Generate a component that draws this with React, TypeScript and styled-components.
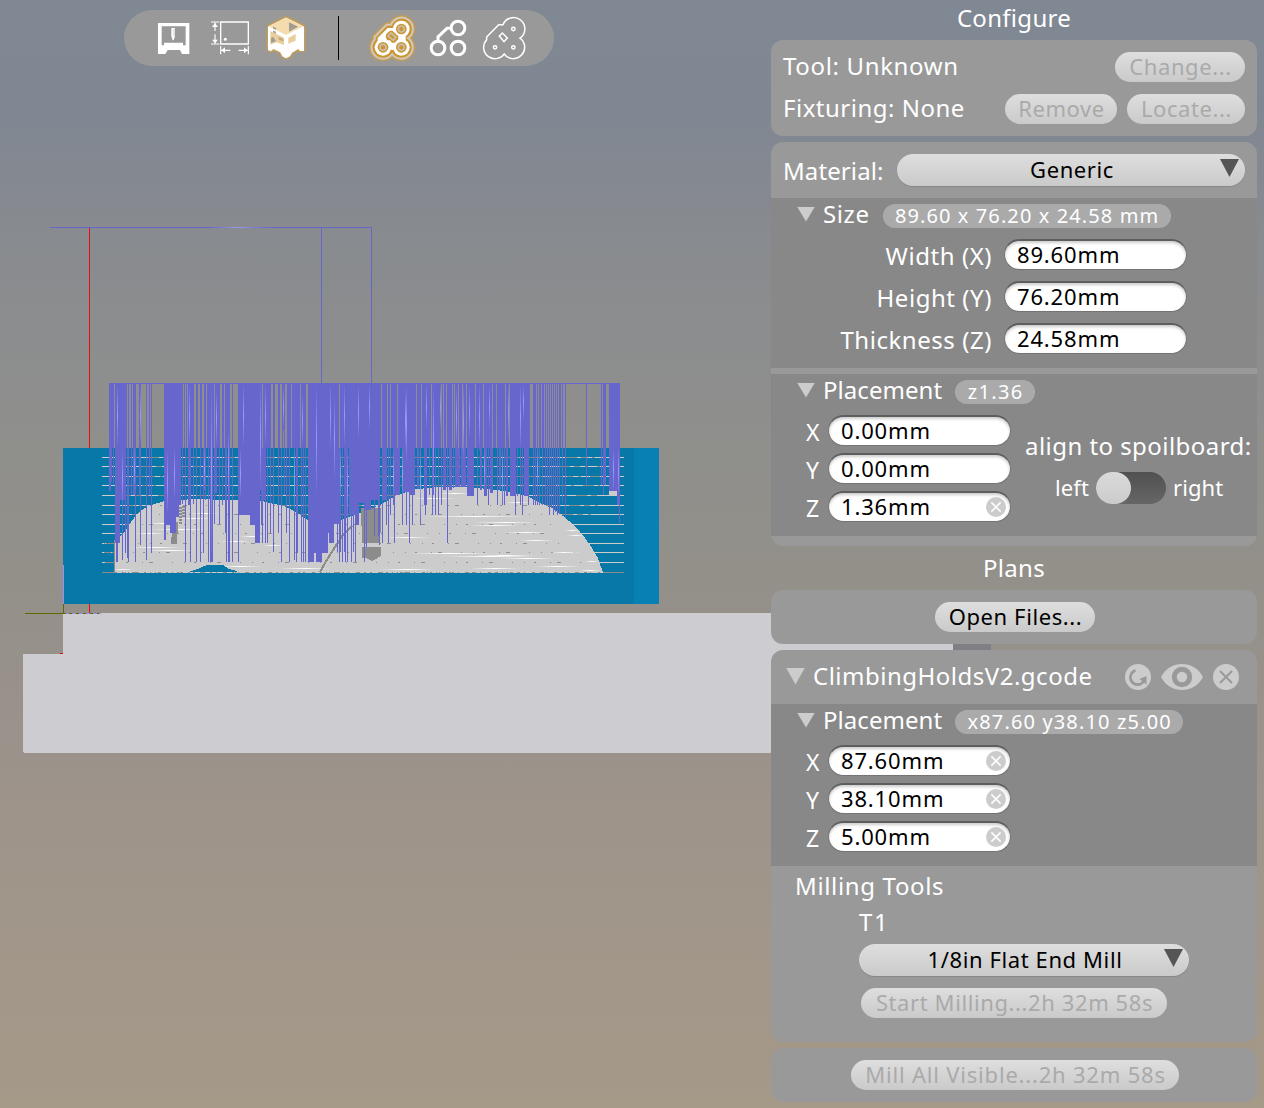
import React from "react";
import styled, { createGlobalStyle } from "styled-components";

const Global = createGlobalStyle`
  * { box-sizing: border-box; }
  html, body { margin: 0; padding: 0; overflow: hidden; }
  body, button, input { font-family: "Noto Sans", "Open Sans", sans-serif; }
`;

const Screen = styled.main`
  position: relative;
  display: flex;
  justify-content: space-between;
  width: 1264px;
  height: 1108px;
  overflow: hidden;
  color: #fff;
  background: linear-gradient(#7f8893 0, #808792 110px, #888b8f 240px, #8d8e8e 370px, #929089 560px, #99918b 700px, #9f958a 860px, #a59988 1108px);
`;

const SceneLayer = styled.svg`
  position: absolute;
  inset: 0;
`;

const Toolbar = styled.nav`
  position: relative;
  display: flex;
  align-items: center;
  width: 430px;
  height: 56px;
  margin: 10px 0 0 124px;
  padding-left: 29px;
  border-radius: 28px;
  background: #999;
`;

const ToolGroup = styled.div`
  display: flex;
  gap: 14px;
`;

const Divider = styled.div`
  width: 1px;
  height: 44px;
  margin: 0 32px 0 31px;
  background: #000;
`;

const ToolIcon = styled.svg<{ $active?: boolean }>`
  display: block;
  width: 42px;
  height: 42px;
  overflow: visible;
  filter: ${(p) => (p.$active ? "drop-shadow(0 0 1px #dda032) drop-shadow(0 0 1px #dda032)" : "none")};
`;

const Sidebar = styled.aside`
  position: relative;
  display: flex;
  flex-direction: column;
  width: 486px;
  margin-right: 7px;
`;

const Title = styled.h2<{ $height: number }>`
  height: ${(p) => p.$height}px;
  margin: 0;
  font-size: 24px;
  font-weight: 400;
  letter-spacing: 0.3px;
  line-height: 35px;
  text-align: center;
`;

const Card = styled.section<{ $height: number; $gap?: number }>`
  flex: none;
  height: ${(p) => p.$height}px;
  margin-bottom: ${(p) => p.$gap ?? 6}px;
  border-radius: 12px;
  background: #999;
  overflow: hidden;
`;

const Row = styled.div<{ $pad?: string; $gap?: number; $justify?: string }>`
  display: flex;
  align-items: center;
  justify-content: ${(p) => p.$justify ?? "flex-start"};
  gap: ${(p) => p.$gap ?? 0}px;
  padding: ${(p) => p.$pad ?? "12px 12px 0"};
`;

const Label = styled.span<{ $size?: number; $spacing?: number; $grow?: boolean; $drop?: number }>`
  flex: ${(p) => (p.$grow ? "1" : "none")};
  padding-top: ${(p) => p.$drop ?? 0}px;
  padding-bottom: ${(p) => 2 - (p.$drop ?? 0)}px;
  font-size: ${(p) => p.$size ?? 24}px;
  letter-spacing: ${(p) => p.$spacing ?? 0.5}px;
  line-height: 28px;
  white-space: nowrap;
`;

const FieldLabel = styled.span<{ $wide: boolean }>`
  flex: none;
  width: ${(p) => (p.$wide ? 220 : 22)}px;
  padding: 2px ${(p) => (p.$wide ? 12 : 0)}px 0 0;
  font-size: ${(p) => (p.$wide ? 24 : 23)}px;
  letter-spacing: 0.55px;
  line-height: 28px;
  text-align: ${(p) => (p.$wide ? "right" : "left")};
  white-space: nowrap;
`;

const Pill = styled.button<{ $width: number; $spacing?: number }>`
  flex: none;
  width: ${(p) => p.$width}px;
  height: 30px;
  padding: 0 0 2px 1px;
  border: 0;
  border-radius: 15px;
  background: linear-gradient(#dedede, #cacaca);
  color: #000;
  font-size: 22px;
  letter-spacing: ${(p) => p.$spacing ?? 0.6}px;
  line-height: 28px;
  white-space: nowrap;
  &:disabled { color: #aaa; }
`;

const SelectBox = styled.button<{ $width: number }>`
  display: flex;
  align-items: center;
  flex: none;
  width: ${(p) => p.$width}px;
  height: 32px;
  padding: 0 6px 0 27px;
  border: 0;
  border-radius: 16px;
  background: linear-gradient(#dedede, #cacaca);
  box-shadow: 0 1px 1px #888;
  color: #000;
  font-size: 22px;
  letter-spacing: 0.6px;
`;

const SelectValue = styled.span`
  flex: 1;
  padding-bottom: 2px;
  line-height: 30px;
  text-align: center;
`;

const Caret = styled.span<{ $w: number; $h: number; $dark?: boolean }>`
  flex: none;
  width: ${(p) => p.$w}px;
  height: ${(p) => p.$h}px;
  margin-bottom: ${(p) => (p.$dark ? 4 : 2)}px;
  background: ${(p) => (p.$dark ? "#555" : "#ccc")};
  clip-path: polygon(0 0, 100% 0, 50% 100%);
`;

const Inset = styled.div<{ $height: number; $gap?: number }>`
  height: ${(p) => p.$height}px;
  margin-bottom: ${(p) => p.$gap ?? 0}px;
  background: #888;
`;

const InsetHeader = styled.div`
  display: flex;
  align-items: center;
  height: 36px;
  padding: 0 0 2px 26px;
  gap: 8px;
`;

const Badge = styled.span<{ $width: number; $spacing: number }>`
  width: ${(p) => p.$width}px;
  height: 24px;
  margin: 2px 0 0 5px;
  padding-left: 1px;
  border-radius: 12px;
  background: #aaa;
  font-size: 20px;
  letter-spacing: ${(p) => p.$spacing}px;
  line-height: 24px;
  text-align: center;
  white-space: nowrap;
`;

const Fields = styled.div<{ $gap: number; $pad: string }>`
  display: flex;
  flex-direction: column;
  gap: ${(p) => p.$gap}px;
  padding: ${(p) => p.$pad};
`;

const FieldRow = styled.label`
  display: flex;
  align-items: center;
  height: 30px;
`;

const InputShell = styled.span`
  display: flex;
  align-items: center;
  width: 183px;
  height: 31px;
  margin-bottom: 2px;
  padding: 0 4px 0 12px;
  border: 1px solid #747474;
  border-top: 2px solid #5e5e5e;
  border-radius: 16px;
  background: #fff;
  box-shadow: inset 0 2px 3px #ccc;
`;

const ValueInput = styled.input`
  flex: 1;
  min-width: 0;
  height: 28px;
  padding: 0 0 2px;
  border: 0;
  outline: 0;
  background: transparent;
  color: #000;
  font-size: 22px;
  letter-spacing: 0.85px;
`;

const PlacementBody = styled.div`
  display: flex;
`;

const AlignBlock = styled.div`
  display: flex;
  flex-direction: column;
  gap: 10px;
  padding: 22px 0 0 14px;
`;

const ToggleRow = styled.div`
  display: flex;
  align-items: center;
  gap: 7px;
  padding-left: 30px;
`;

const Track = styled.span`
  width: 70px;
  height: 32px;
  border-radius: 16px;
  background: linear-gradient(#505050, #666);
`;

const Knob = styled.span`
  display: block;
  width: 35px;
  height: 32px;
  border-radius: 16px;
  background: linear-gradient(#dadada, #cbcbcb);
`;

const IconSvg = styled.svg`
  flex: none;
  display: block;
`;

const FileHeading = styled.div`
  display: flex;
  flex: 1;
  align-items: center;
  gap: 8px;
`;

const ToolStack = styled.div`
  display: flex;
  flex-direction: column;
  padding-left: 88px;
`;

const StartRow = styled.div`
  padding: 12px 0 0 2px;
`;

/* ---------- toolpath scene ---------- */

// Rapid moves above the stock: [left, right]
const upper = [
  [109, 114], [115, 127], [128, 129], [131, 132], [133, 136], [139, 141], [146, 147], [149, 150], [151, 152],
  [164, 183], [184, 185], [186, 187], [188, 194], [196, 198], [200, 202], [204, 206], [207, 214], [215, 220],
  [222, 224], [225, 230], [232, 233], [238, 262], [263, 271], [273, 275], [278, 280], [282, 283], [284, 285],
  [287, 291], [292, 300], [301, 306], [308, 339], [340, 381], [382, 387], [388, 390], [391, 397], [398, 416],
  [417, 421], [422, 431], [432, 441], [442, 443], [444, 446], [447, 452], [453, 454], [455, 458], [459, 462],
  [463, 466], [467, 475], [476, 479], [480, 483], [484, 492], [493, 496], [497, 505], [506, 509], [510, 520],
  [521, 530], [533, 536], [537, 538], [539, 541], [542, 544], [545, 546], [547, 548], [549, 550], [551, 552],
  [553, 554], [555, 556], [557, 558], [559, 561], [562, 563], [565, 566], [586, 587], [601, 602], [603, 606],
  [609, 620],
];

// Plunges into the stock: [left, right, bottom]
const lower = [
  [109, 111, 491], [111, 112, 482], [113, 114, 484], [115, 120, 543], [116, 118, 562], [119, 125, 500], [122, 123, 560],
  [125, 126, 553], [127, 128, 558], [128, 129, 562], [131, 132, 495], [133, 136, 495], [135, 136, 562], [139, 141, 495],
  [140, 141, 545], [146, 147, 560], [151, 152, 553], [149, 150, 495], [164, 166, 540], [166, 170, 525], [170, 176, 533],
  [176, 179, 517], [179, 181, 505], [182, 183, 504], [185, 186, 562], [188, 190, 505], [190, 191, 562], [193, 194, 504],
  [196, 197, 562], [200, 201, 562], [203, 204, 553], [205, 206, 500], [208, 209, 562], [210, 213, 562], [214, 215, 524],
  [215, 217, 493], [219, 220, 524], [222, 223, 505], [225, 226, 533], [226, 227, 562], [228, 230, 562], [232, 233, 562],
  [238, 239, 562], [239, 250, 515], [250, 255, 525], [255, 260, 543], [261, 262, 525], [262, 263, 543], [265, 266, 543],
  [267, 268, 543], [263, 265, 500], [270, 271, 533], [273, 274, 552], [278, 279, 533], [281, 282, 562], [284, 285, 495],
  [286, 287, 533], [289, 290, 562], [294, 295, 560], [296, 297, 562], [297, 298, 553], [301, 302, 562], [303, 304, 562],
  [305, 306, 562], [308, 314, 562], [314, 316, 553], [316, 322, 562], [321, 328, 553], [327, 329, 533], [329, 334, 543],
  [335, 336, 524], [337, 338, 552], [339, 340, 562], [342, 343, 562], [345, 346, 562], [347, 348, 552], [334, 339, 524],
  [340, 341, 552], [344, 345, 552], [345, 347, 516], [347, 348, 562], [349, 356, 515], [351, 352, 562],
  [353, 354, 552], [355, 356, 562], [356, 359, 525], [359, 365, 503], [364, 365, 562], [366, 367, 547], [365, 371, 510],
  [371, 380, 500], [374, 375, 536], [378, 379, 536], [379, 380, 545], [382, 383, 543], [383, 387, 500], [386, 387, 525],
  [388, 389, 543], [390, 391, 515], [393, 394, 505], [394, 395, 543], [395, 400, 495], [402, 403, 525], [403, 409, 492],
  [406, 407, 525], [409, 410, 543], [410, 415, 495], [412, 413, 525], [417, 419, 489], [420, 421, 525], [424, 427, 505],
  [425, 426, 515], [429, 430, 495], [432, 433, 515], [435, 436, 515], [438, 439, 515], [441, 442, 505], [443, 446, 490],
  [447, 448, 543], [449, 452, 490], [453, 454, 488], [455, 460, 487], [461, 466, 487], [467, 474, 496], [477, 478, 505],
  [480, 482, 490], [484, 487, 496], [488, 489, 505], [490, 493, 493], [497, 498, 505], [499, 501, 489], [502, 503, 505],
  [504, 505, 505], [506, 508, 496], [510, 516, 496], [515, 516, 515], [517, 518, 496], [520, 521, 505], [522, 523, 515],
  [524, 529, 496], [528, 529, 505], [533, 534, 505], [535, 536, 505], [537, 538, 505], [539, 540, 505], [542, 543, 505],
  [545, 546, 505], [547, 548, 505], [549, 550, 515], [551, 552, 508], [553, 554, 515], [555, 556, 512], [557, 558, 515],
  [559, 560, 514], [562, 563, 503], [565, 566, 517], [586, 587, 485], [601, 602, 485], [603, 604, 495], [604, 606, 485],
  [609, 617, 491], [617, 620, 505], [619, 620, 523],
];

// Highlighted moves: [x, top, bottom]
const bright = [
  [117, 384, 447], [122, 450, 505], [140, 384, 447], [134, 448, 490], [167, 450, 515], [174, 448, 500], [189, 384, 447],
  [204, 448, 490], [211, 384, 560], [216, 390, 447], [228, 430, 500], [243, 384, 447], [240, 448, 500], [260, 384, 490],
  [265, 384, 447], [283, 384, 430], [294, 448, 510], [302, 395, 447], [316, 384, 495], [330, 384, 450], [334, 395, 480],
  [340, 450, 500], [344, 384, 447], [347, 450, 520], [358, 384, 440], [369, 384, 430], [393, 450, 500], [402, 448, 500],
  [405, 390, 450], [406, 384, 465], [420, 448, 525], [426, 384, 430], [433, 384, 495], [440, 384, 430], [456, 384, 450],
  [463, 384, 460], [469, 384, 440], [479, 384, 450], [484, 448, 490], [489, 384, 430], [502, 448, 505], [508, 384, 440],
  [520, 384, 450], [523, 384, 420], [537, 448, 490], [613, 448, 491], [618, 448, 496],
];

const passes = [457, 466, 476, 485, 495, 505, 514, 524, 533, 543, 552, 562, 572];

// Short glints on the machined surface: [x, y, length]
const glints = [
  [146, 523, 40], [135, 533, 30], [178, 518, 35], [130, 547, 52], [146, 550, 50], [217, 566, 45], [113, 569, 20],
  [220, 541, 30], [240, 536, 25], [262, 545, 22], [280, 568, 50], [150, 529, 60], [190, 513, 30], [425, 516, 100],
  [475, 522, 60], [385, 537, 45], [470, 525, 50], [505, 532, 42], [520, 540, 32], [410, 553, 80], [445, 556, 90],
  [475, 555, 60], [500, 558, 55], [380, 569, 55], [470, 568, 50], [535, 566, 45], [565, 530, 15], [568, 535, 16],
  [580, 570, 20], [412, 498, 45], [440, 493, 30], [505, 502, 25], [550, 552, 30], [585, 561, 14],
];

const barPath = (bars: number[][], top: number, fixed?: number) =>
  bars.map((b) => `M${b[0]} ${top}H${b[1]}V${fixed ?? b[2]}H${b[0]}Z`).join("");

const Scene = () => (
  <SceneLayer width="1264" height="1108" viewBox="0 0 1264 1108" shapeRendering="crispEdges">
    <defs>
      <linearGradient id="beam">
        <stop offset=".5" stopColor="#6666cc" />
        <stop offset=".58" stopColor="#9999ee" />
        <stop offset=".68" stopColor="#6666cc" />
      </linearGradient>
      <linearGradient id="glint">
        <stop offset="0" stopColor="#fff" stopOpacity="0" />
        <stop offset=".5" stopColor="#fff" />
        <stop offset="1" stopColor="#fff" stopOpacity="0" />
      </linearGradient>
      <linearGradient id="lit" x2="0" y2="1">
        <stop offset="0" stopColor="#6666cc" />
        <stop offset=".5" stopColor="#9999ff" />
        <stop offset="1" stopColor="#6666cc" />
      </linearGradient>
    </defs>
    <path d="M63 613H953V752H23V654H63Z" fill="#cdccd1" />
    <path d="M24 752H953V753H24Z" fill="#cdccd1" />
    <path d="M953 640H991V654H953Z" fill="#807f85" />
    <path d="M89 228h1v385h-1z" fill="#e80c0c" />
    <path d="M60 653h3v1h-3z" fill="#e80c0c" />
    <path d="M50 227h322v1H50z" fill="url(#beam)" />
    <path d="M321 228h1v155h-1zM371 228h1v155h-1z" fill="#6666cc" />
    <path d="M63 448H634V604H63Z" fill="#0878a8" />
    <path d="M634 448H659V604H634Z" fill="#0880b3" />
    <path d="M63 565h1v39h-1z" fill="#9090ff" />
    <path d="M63 604h1v9h-1zM25 613h41v1H25z" fill="#666600" />
    <path d="M66 613.5h35" stroke="#9090f0" />
    <path d="M69 613.5h30" stroke="#666600" strokeDasharray="3 4" />
    {passes.map((y, i) => (
      <g key={y}>
        <path d={`M102 ${y}.5H624`} stroke={i === 12 ? "#8c8c8c" : "#ccc"} />
        <path d={`M${i > 8 ? 104 : 125} ${y}.5H${i > 6 ? 400 : 600}`} stroke="#8c8c8c" strokeDasharray={i > 8 ? "12 1" : "6 5 3 9 11 4"} strokeDashoffset={i * 7} />
      </g>
    ))}
    <path
      d="M114 572V543L120 537L126 530L131 522L137 514L142 510L148 506L158 503L164 501L185 500L188 499L237 500L262 501L274 504L284 506L296 512L306 519L313 526L330 526L345 518L360 513L380 505L397 495L417 489L440 487L460 487L490 489L510 492L527 496L540 503L552 508L563 516L575 526L585 538L592 548L598 558L601 567L603 572V573H114Z"
      fill="#ccc"
    />
    {passes.slice(5).map((y, i) => (
      <path key={y} d={`M${150 - i * 4} ${y}.5H${540 + i * 7}`} stroke="#909090" strokeDasharray="1 9 2 14 1 6 4 19 1 11" strokeDashoffset={i * 13} />
    ))}
    <path d="M114 572.5H600" stroke="#909090" strokeDasharray="3 5 2 4 1 7" />
    {glints.map(([x, y, w]) => (
      <path key={`${x}-${y}`} d={`M${x} ${y}h${w}v1h${-w}z`} fill="url(#glint)" />
    ))}
    <path d="M188 572L200 568L207 565H223L229 569L237 571V572Z" fill="#0878a8" />
    <path d="M320 572L325 563L333 550L343 535L352 526" fill="none" stroke="#8c8c8c" strokeWidth="2" />
    <path d="M114 572V540" stroke="#8c8c8c" />
    <path d="M361 508H381V532L379 535V543H362ZM362 547H381V556L376 559L372 561L366 558H362ZM172 533H177V544H171V541ZM174 522H178V533H174Z" fill="#8c8c8c" />
    <path d="M180 507v18M183 506v12" stroke="#8c8c8c" strokeDasharray="2 1" strokeWidth="3" />
    <path d="M609 491h8v4h-8z" fill="#ccc" />
    <path d="M109 383H620V384H109Z" fill="#6666cc" />
    <path d={barPath(upper, 384, 448)} fill="#6666cc" />
    <path d={barPath(lower, 448)} fill="#6666cc" />
    {bright.map(([x, top, bottom]) => (
      <rect key={`${x}-${top}`} x={x} y={top} width="1" height={bottom - top} fill="url(#lit)" />
    ))}
  </SceneLayer>
);

/* ---------- toolbar icons ---------- */

const MachineFront = () => (
  <ToolIcon viewBox="99 51 126 126">
    <path fillRule="evenodd" fill="#fff" d="M114 69H208V162H186L180 150H143L136 162H114ZM125 79V136H132V128H189V136H197V79Z" />
    <path d="M154 84H165V108L161 121H158L154 108Z" fill="#fff" />
    <path d="M162 87V108" stroke="#aaa" strokeWidth="2" />
  </ToolIcon>
);

const Dimensions = () => (
  <ToolIcon viewBox="267 51 126 126" fill="none" stroke="#fff" strokeWidth="4">
    <path d="M302 66H385V132H302Z" />
    <path d="M273 66H298M273 132H298M285 68V93M285 103V130M302 138V163M385 138V163M304 151H331M356 151H383" strokeWidth="3.4" />
    <path d="M276 81L285 69L294 81ZM276 119L285 130L294 119ZM315 142L304 151L315 160ZM372 142L383 151L372 160Z" fill="#fff" stroke="none" />
    <circle cx="316" cy="118" r="4.5" fill="#fff" stroke="none" />
  </ToolIcon>
);

const MachineCube = () => (
  <ToolIcon $active viewBox="435 51 126 126">
    <path d="M498 54L552 81V153H540L535 147L516 158L510 169L498 175L487 169L481 157L460 147L453 154L444 150V81Z" fill="#fff" />
    <path d="M498 54L550 80L498 106L446 80Z" fill="#f4dcae" />
    <path d="M451 93L492 113V135L470 127L451 134Z" fill="#e9cf9f" />
    <path d="M459 80L468 84V101L459 97Z" fill="#a39c90" />
    <path d="M453 114L459 110L468 123L453 129Z" fill="#a39c90" />
    <path d="M476 110L490 117V124L476 119Z" fill="#c3aa7d" />
    <path d="M507 67L534 80L507 95Z" fill="#a39c90" />
    <path d="M505 113L527 102V122L520 125L505 131Z" fill="#e9cf9f" />
    <path d="M498 54L552 81M498 54L444 81" fill="none" stroke="#f9e6c3" strokeWidth="3" />
    <path d="M446 82L498 108L550 82" fill="none" stroke="#fff" strokeWidth="5" />
  </ToolIcon>
);

const OUTLINE =
  "M1100 119V111L1136 74H1149A34 34 0 1 1 1200 114.5A34 34 0 1 1 1152.5 162A34 34 0 1 1 1100 119Z";

const PathsActive = () => (
  <ToolIcon $active viewBox="753 51 126 126" fill="none">
    <path d={OUTLINE} transform="translate(-336 0)" fill="#cb9534" stroke="#d0c8bb" strokeWidth="6" />
    <g fill="#fff">
      <circle cx="844" cy="87" r="25" />
      <circle cx="789" cy="142" r="25" />
      <circle cx="844" cy="142" r="25" />
      <path d="M773 126V114L803 84H820L857 105V125L844 142L817 150L789 142Z" />
    </g>
    <g fill="#cb9534">
      <circle cx="844" cy="87" r="16" />
      <circle cx="789" cy="142" r="16" />
      <circle cx="844" cy="142" r="16" />
      <path d="M797 110L799 102L810 92H817L835 109V117L824 128H816L810 121H802Z" />
    </g>
    <g stroke="#cbbfa9" strokeWidth="5">
      <circle cx="844" cy="87" r="9" />
      <circle cx="789" cy="142" r="9" />
      <circle cx="844" cy="142" r="9" />
      <path d="M804 108L813 99L828 112L820 121Z" />
    </g>
  </ToolIcon>
);

const PathsCut = () => (
  <ToolIcon viewBox="921 51 126 126" fill="none" stroke="#fff" strokeWidth="9">
    <circle cx="1014" cy="84" r="20.5" />
    <circle cx="954" cy="144" r="20.5" />
    <circle cx="1014" cy="144" r="20.5" />
    <path d="M954 124V111L981 85H994" />
  </ToolIcon>
);

const PathsOutline = () => (
  <ToolIcon viewBox="1089 51 126 126" fill="none" stroke="#fff" strokeWidth="4.5">
    <path d={OUTLINE} />
    <circle cx="1180" cy="87" r="5" />
    <circle cx="1125" cy="142" r="5" />
    <circle cx="1180" cy="142" r="5" />
    <path d="M1138 108L1147 99L1162 114L1152 125Z" />
  </ToolIcon>
);

/* ---------- sidebar pieces ---------- */

const CloseIcon = ({ size, ground }: { size: number; ground: string }) => (
  <IconSvg width={size} height={size} viewBox="0 0 26 26">
    <circle cx="13" cy="13" r="13" fill="#ccc" />
    <path d="M7 7L19 19M19 7L7 19" stroke={ground} strokeWidth="2" />
  </IconSvg>
);

const ReloadIcon = () => (
  <IconSvg width="26" height="26" viewBox="0 0 26 26">
    <circle cx="13" cy="13" r="13" fill="#ccc" />
    <path d="M10.5 6.5A7.2 7.2 0 1 0 18.5 17.5" fill="none" stroke="#999" strokeWidth="2.6" />
    <path d="M14.5 15L21.5 12V20.5Z" fill="#999" />
  </IconSvg>
);

const EyeIcon = () => (
  <IconSvg width="42" height="26" viewBox="0 0 42 26">
    <path d="M0 13C9-4.3 33-4.3 42 13C33 30.3 9 30.3 0 13Z" fill="#ccc" />
    <circle cx="21" cy="13" r="7.7" fill="none" stroke="#999" strokeWidth="5" />
  </IconSvg>
);

const Field = ({ label, value, wide = false, clearable }: { label: string; value: string; wide?: boolean; clearable?: boolean }) => (
  <FieldRow>
    <FieldLabel $wide={wide}>{label}</FieldLabel>
    <InputShell>
      <ValueInput defaultValue={value} />
      {clearable && <CloseIcon size={20} ground="#fff" />}
    </InputShell>
  </FieldRow>
);

const InsetTitle = ({ title, badge, width, spacing, tracking }: { title: string; badge: string; width: number; spacing: number; tracking: number }) => (
  <InsetHeader>
    <Caret $w={18} $h={15} />
    <Label $spacing={tracking}>{title}</Label>
    <Badge $width={width} $spacing={spacing}>{badge}</Badge>
  </InsetHeader>
);

const Select = ({ value, width }: { value: string; width: number }) => (
  <SelectBox $width={width}>
    <SelectValue>{value}</SelectValue>
    <Caret $w={19} $h={18} $dark />
  </SelectBox>
);

export default function App() {
  return (
    <>
      <Global />
      <Screen>
        <Scene />
        <Toolbar>
          <ToolGroup>
            <MachineFront />
            <Dimensions />
            <MachineCube />
          </ToolGroup>
          <Divider />
          <ToolGroup>
            <PathsActive />
            <PathsCut />
            <PathsOutline />
          </ToolGroup>
        </Toolbar>
        <Sidebar>
          <Title $height={40}>Configure</Title>
          <Card $height={96}>
            <Row>
              <Label $grow $spacing={0.65}>Tool: Unknown</Label>
              <Pill $width={130} disabled>Change...</Pill>
            </Row>
            <Row $gap={10}>
              <Label $grow>Fixturing: None</Label>
              <Pill $width={112} disabled>Remove</Pill>
              <Pill $width={118} disabled>Locate...</Pill>
            </Row>
          </Card>
          <Card $height={404} $gap={4}>
            <Row $pad="12px" $justify="space-between">
              <Label $spacing={0.1} $drop={2}>Material:</Label>
              <Select value="Generic" width={348} />
            </Row>
            <Inset $height={170} $gap={6}>
              <InsetTitle title="Size" badge="89.60 x 76.20 x 24.58 mm" width={288} spacing={1.1} tracking={0.6} />
              <Fields $gap={12} $pad="6px 0 0 13px">
                <Field label="Width (X)" value="89.60mm" wide />
                <Field label="Height (Y)" value="76.20mm" wide />
                <Field label="Thickness (Z)" value="24.58mm" wide />
              </Fields>
            </Inset>
            <Inset $height={162}>
              <InsetTitle title="Placement" badge="z1.36" width={80} spacing={1.3} tracking={0.05} />
              <PlacementBody>
                <Fields $gap={8} $pad="6px 0 0 35px">
                  <Field label="X" value="0.00mm" />
                  <Field label="Y" value="0.00mm" />
                  <Field label="Z" value="1.36mm" clearable />
                </Fields>
                <AlignBlock>
                  <Label $spacing={0.45}>align to spoilboard:</Label>
                  <ToggleRow>
                    <Label $size={22} $spacing={0.1}>left</Label>
                    <Track><Knob /></Track>
                    <Label $size={22} $spacing={0.1}>right</Label>
                  </ToggleRow>
                </AlignBlock>
              </PlacementBody>
            </Inset>
          </Card>
          <Title $height={40}>Plans</Title>
          <Card $height={54}>
            <Row $justify="center" $pad="12px 0 0 2px">
              <Pill $width={160}>Open Files...</Pill>
            </Row>
          </Card>
          <Card $height={392}>
            <Row $gap={10} $pad="12px 18px 12px 15px">
              <FileHeading>
                <Caret $w={19} $h={17} />
                <Label>ClimbingHoldsV2.gcode</Label>
              </FileHeading>
              <ReloadIcon />
              <EyeIcon />
              <CloseIcon size={26} ground="#999" />
            </Row>
            <Inset $height={162}>
              <InsetTitle title="Placement" badge="x87.60 y38.10 z5.00" width={228} spacing={1.15} tracking={0.05} />
              <Fields $gap={8} $pad="6px 0 0 35px">
                <Field label="X" value="87.60mm" clearable />
                <Field label="Y" value="38.10mm" clearable />
                <Field label="Z" value="5.00mm" clearable />
              </Fields>
            </Inset>
            <Row $pad="6px 24px 6px">
              <Label $spacing={0.65}>Milling Tools</Label>
            </Row>
            <ToolStack>
              <Row $pad="0 0 6px">
                <Label $spacing={1.6}>T1</Label>
              </Row>
              <Select value="1/8in Flat End Mill" width={330} />
              <StartRow>
                <Pill $width={306} disabled>Start Milling...2h 32m 58s</Pill>
              </StartRow>
            </ToolStack>
          </Card>
          <Card $height={54} $gap={6}>
            <Row $justify="center" $pad="12px 0 0 2px">
              <Pill $width={328} $spacing={0.8} disabled>Mill All Visible...2h 32m 58s</Pill>
            </Row>
          </Card>
        </Sidebar>
      </Screen>
    </>
  );
}
